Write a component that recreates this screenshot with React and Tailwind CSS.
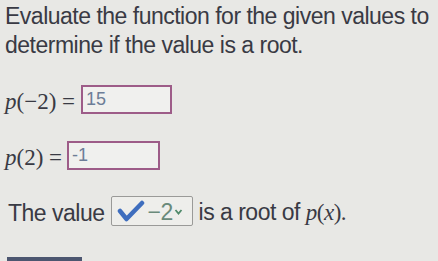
export default function App() {
  const serif = { fontFamily: '"Liberation Serif", "Times New Roman", serif' };
  return (
    <div className="w-[438px] h-[261px] overflow-hidden bg-[#e8e8e5] text-[#393a44] relative" style={{ fontFamily: '"Liberation Sans", Arial, sans-serif' }}>
      <div className="pt-[2px] pl-[5px] text-[23px] leading-[29px] tracking-[-0.5px]">
        <div>Evaluate the function for the given values to</div>
        <div>determine if the value is a root.</div>
      </div>
      <div className="mt-[25px] pl-[5px] flex items-center h-[29px]">
        <span className="text-[23px] pt-[6px]" style={serif}>
          <i>p</i>(−2) =
        </span>
        <div className="ml-[6px] w-[91px] h-[29px] border-2 border-[#9d5c88] bg-[#f0f0ee] flex items-center pl-[3px] text-[18px] text-[#6d7d97]">15</div>
      </div>
      <div className="mt-[27px] pl-[5px] flex items-center h-[29px]">
        <span className="text-[23px] pt-[6px]" style={serif}>
          <i>p</i>(2) =
        </span>
        <div className="ml-[5px] w-[93px] h-[29px] border-2 border-[#9d5c88] bg-[#f0f0ee] flex items-center pl-[3px] text-[18px] text-[#6d7d97]">-1</div>
      </div>
      <div className="mt-[26px] pl-[8px] flex items-center h-[30px] text-[23px] tracking-[-0.5px]">
        <span className="pt-[4px]">The value</span>
        <div className="ml-[6px] w-[82px] h-[30px] border border-[#9a9a98] rounded-[2px] bg-[#eeeeeb] flex items-center pl-[5px]">
          <svg width="28" height="22" viewBox="0 0 28 22">
            <path d="M3 11 L9.5 19 L25 3" fill="none" stroke="#3f6ebe" strokeWidth="4.5" strokeLinecap="round" strokeLinejoin="round" />
          </svg>
          <span className="ml-[3px] pt-[2px] text-[#6a8a7a]">−2</span>
          <svg width="9" height="8" viewBox="0 0 9 8" className="ml-[1px] mt-[2px]">
            <path d="M1.5 2 L4.5 5.5 L7.5 2" fill="none" stroke="#4f8a6a" strokeWidth="1.8" />
          </svg>
        </div>
        <span className="ml-[6px] pt-[4px]">is a root of <span style={serif}><i>p</i>(<i>x</i>).</span></span>
      </div>
      <div className="absolute left-[7px] bottom-0 w-[75px] h-[4px] bg-[#4c5670]"></div>
    </div>
  );
}
